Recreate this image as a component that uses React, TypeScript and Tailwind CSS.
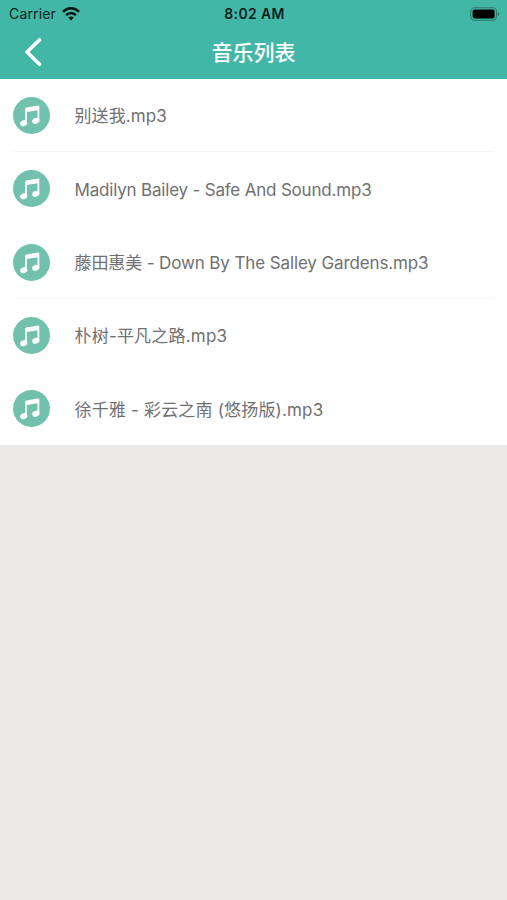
const SONGS = [
  { title: '别送我.mp3', border: 'border-[#f6f6f6]', tracking: 'tracking-[0.1px]' },
  { title: 'Madilyn Bailey - Safe And Sound.mp3', border: 'border-transparent', tracking: 'tracking-[-0.19px]' },
  { title: '藤田惠美 - Down By The Salley Gardens.mp3', border: 'border-[#f9f9f9]', tracking: 'tracking-[-0.12px]' },
  { title: '朴树-平凡之路.mp3', border: 'border-[#fcfcfc]', tracking: 'tracking-[0.2px]' },
  { title: '徐千雅 - 彩云之南 (悠扬版).mp3', border: 'border-transparent', tracking: 'tracking-[0.18px]' },
]

export default function App() {
  return (
    <div className="h-[900px] w-[507px] overflow-hidden bg-[#ebeae8] font-['Inter','Noto_Sans_CJK_SC',sans-serif]">
      <header className="h-[79px] bg-[#43b7a7]">
        <StatusBar />
        <NavBar />
      </header>
      <ul className="bg-white">
        {SONGS.map(song => (
          <SongRow key={song.title} {...song} />
        ))}
      </ul>
    </div>
  )
}

function StatusBar() {
  return (
    <div className="grid h-[27px] grid-cols-3 items-center pl-[9px] pr-[7px] text-[14px] leading-[27px] text-[#0b1f1d]">
      <div className="flex items-center gap-[6px]">
        <span className="tracking-[0.15px]">Carrier</span>
        <WifiIcon />
      </div>
      <span className="text-center font-semibold tracking-[0.35px]">8:02 AM</span>
      <div className="flex justify-end">
        <BatteryIcon />
      </div>
    </div>
  )
}

function NavBar() {
  return (
    <div className="grid h-[52px] grid-cols-3 items-center text-white">
      <button type="button" aria-label="Back" className="ml-[23px] w-5">
        <svg width="20" height="30" viewBox="0 0 20 30" fill="none" stroke="currentColor" strokeWidth="3.6" strokeLinecap="round" strokeLinejoin="round">
          <path d="M16.5 2L4 14L16.5 26.3" />
        </svg>
      </button>
      <h1 className="text-center text-[21px] font-medium leading-[52px]">音乐列表</h1>
    </div>
  )
}

interface SongRowProps {
  title: string
  border: string
  tracking: string
}

function SongRow({ title, border, tracking }: SongRowProps) {
  return (
    <li className="h-[73.3px] px-[13px]">
      <div className={`flex h-full items-center border-b pt-px ${border}`}>
        <MusicIcon />
        <span className={`ml-[24.5px] whitespace-nowrap pt-[3px] text-[17px] text-[#707070] ${tracking}`}>{title}</span>
      </div>
    </li>
  )
}

function MusicIcon() {
  return (
    <svg className="shrink-0" width="37" height="37" viewBox="0 0 37 37">
      <circle cx="18.5" cy="18.5" r="18.5" fill="#71c1ad" />
      <g fill="#fff">
        <path d="M12.1 11.7Q12.2 10.6 13.3 10.4L25 8.6Q26.3 8.5 26.3 9.6V24H24.5V13.2L13.9 15V26.5H12.1Z" />
        <ellipse cx="10.7" cy="26.2" rx="3.7" ry="2.9" transform="rotate(-20 10.7 26.2)" />
        <ellipse cx="22.8" cy="23.8" rx="3.7" ry="2.9" transform="rotate(-20 22.8 23.8)" />
      </g>
    </svg>
  )
}

function WifiIcon() {
  return (
    <svg width="18" height="14" viewBox="0 0 18 14" fill="none" stroke="#071413" strokeWidth="2.5">
      <path d="M1 4.9Q4.4 1.3 9 1.3T17 4.9" />
      <path d="M4.1 8.1Q6.2 5.9 9 5.9T13.9 8.1" />
      <path d="M9 13.4L6.3 10.6Q9 8.6 11.7 10.6Z" fill="#071413" stroke="none" />
    </svg>
  )
}

function BatteryIcon() {
  return (
    <svg width="30" height="14" viewBox="0 0 30 14">
      <rect x="0.8" y="0.8" width="25.6" height="12.4" rx="3.6" fill="none" stroke="#2b7a70" strokeWidth="1.1" />
      <rect x="2.6" y="2.6" width="22" height="8.8" rx="1.8" fill="#000" />
      <path d="M27.6 4.8Q29.3 5.5 29.3 7T27.6 9.2Z" fill="#2b7a70" />
    </svg>
  )
}
